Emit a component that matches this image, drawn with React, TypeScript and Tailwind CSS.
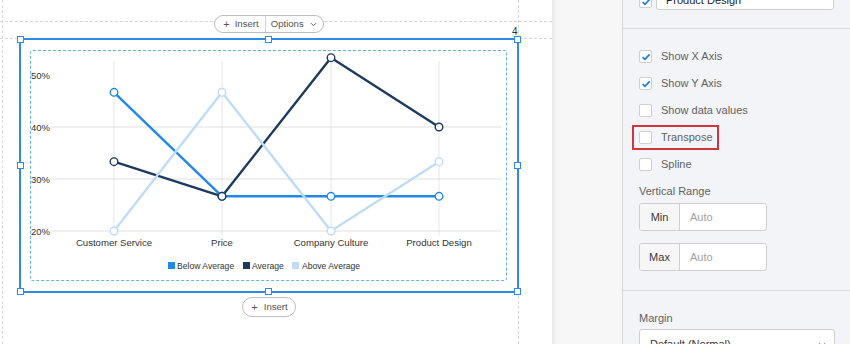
import React from "react";

// ─── Chart data ─────────────────────────────────────────────────────────────

const categories = [
    { label: "Customer Service", x: 114 },
    { label: "Price", x: 222 },
    { label: "Company Culture", x: 331 },
    { label: "Product Design", x: 439 },
];

const series = [
    { name: "Below Average", color: "#2288e8", values: [46.67, 26.67, 26.67, 26.67] },
    { name: "Average", color: "#1b3a5e", values: [33.33, 26.67, 53.33, 40] },
    { name: "Above Average", color: "#bfdcf7", values: [20, 46.67, 20, 33.33] },
];

// 20% sits at y=231, each 10% is 52px
const yFor = (v: number) => 231 - (v - 20) * 5.2;

function LineChart() {
    return (
        <svg width={475} height={229} viewBox="31 51 475 229" className="block">
            {/* grid */}
            {categories.map((c) => (
                <line key={c.label} x1={c.x} x2={c.x} y1={61} y2={236} stroke="#e6e6e6" strokeWidth={1} />
            ))}
            {[127, 179, 231].map((y) => (
                <line key={y} x1={50} x2={501} y1={y} y2={y} stroke="#e0e0e0" strokeWidth={1} />
            ))}

            {/* y labels */}
            {[
                { t: "50%", y: 75 },
                { t: "40%", y: 127 },
                { t: "30%", y: 179 },
                { t: "20%", y: 231 },
            ].map((l) => (
                <text key={l.t} x={31} y={l.y + 3.5} fontSize={9.5} fill="#333">
                    {l.t}
                </text>
            ))}

            {/* series */}
            {series.map((s) => (
                <polyline
                    key={s.name}
                    points={s.values.map((v, i) => `${categories[i].x},${yFor(v)}`).join(" ")}
                    fill="none"
                    stroke={s.color}
                    strokeWidth={2.4}
                    strokeLinejoin="round"
                />
            ))}
            {series.map((s) =>
                s.values.map((v, i) => (
                    <circle
                        key={`${s.name}-${i}`}
                        cx={categories[i].x}
                        cy={yFor(v)}
                        r={3.8}
                        fill="#fff"
                        stroke={s.color}
                        strokeWidth={1.4}
                    />
                )),
            )}

            {/* x labels */}
            {categories.map((c) => (
                <text key={c.label} x={c.x} y={245.5} fontSize={9.6} fill="#333" textAnchor="middle">
                    {c.label}
                </text>
            ))}

            {/* legend */}
            <rect x={168} y={262} width={7} height={7} fill="#2288e8" />
            <text x={177} y={269} fontSize={8.6} fill="#333">Below Average</text>
            <rect x={243} y={262} width={7} height={7} fill="#1b3a5e" />
            <text x={252} y={269} fontSize={8.6} fill="#333">Average</text>
            <rect x={292} y={262} width={7} height={7} fill="#bfdcf7" />
            <text x={302} y={269} fontSize={8.6} fill="#333">Above Average</text>
        </svg>
    );
}

// ─── Small pieces ───────────────────────────────────────────────────────────

function Handle({ className }: { className: string }) {
    return <span className={`absolute h-[7px] w-[7px] border border-[#2f8ae6] bg-white ${className}`} />;
}

function Checkbox({ checked }: { checked?: boolean }) {
    return (
        <span className="flex h-[13px] w-[13px] shrink-0 items-center justify-center rounded-[2px] border border-[#cfcfcf] bg-white">
            {checked && (
                <svg width="10" height="10" viewBox="0 0 10 10">
                    <polyline points="1.6,5.2 4,7.4 8.6,2.4" fill="none" stroke="#1a7fd8" strokeWidth={1.7} />
                </svg>
            )}
        </span>
    );
}

function OptionRow({ label, checked, highlight }: { label: string; checked?: boolean; highlight?: boolean }) {
    return (
        <div className="relative flex h-[27px] items-center gap-[9px]">
            <Checkbox checked={checked} />
            <span className="text-[11px] text-[#626262]">{label}</span>
            {highlight && (
                <span className="absolute -left-[7px] top-[1px] h-[25px] w-[87px] border-2 border-[#d1343b]" />
            )}
        </div>
    );
}

function RangeInput({ label }: { label: string }) {
    return (
        <div className="flex h-[28px] w-[128px] overflow-hidden rounded-[3px] border border-[#cfcfcf] bg-white">
            <div className="flex w-[40px] items-center justify-center border-r border-[#cfcfcf] bg-[#f6f6f7] text-[11px] font-medium text-[#3a3a3a]">
                {label}
            </div>
            <div className="flex items-center pl-[10px] text-[11px] text-[#a0a0a0]">Auto</div>
        </div>
    );
}

// ─── Page ───────────────────────────────────────────────────────────────────

export default function App() {
    return (
        <div className="relative flex h-[344px] w-[850px] overflow-hidden bg-white font-['Liberation_Sans',Arial,sans-serif]">
            {/* Canvas */}
            <div className="relative w-[552px] shrink-0 bg-white">
                {/* guides */}
                <div className="absolute left-0 right-0 top-[21px] border-t border-dashed border-[#d6d6d6]" />
                <div className="absolute left-0 right-0 top-[38px] border-t border-dashed border-[#d6d6d6]" />
                <div className="absolute bottom-0 left-[2px] top-0 border-l border-dashed border-[#dadada]" />
                <div className="absolute bottom-0 left-[518px] top-0 border-l border-dashed border-[#d6d6d6]" />
                <span className="absolute left-[512px] top-[27px] text-[10px] leading-none text-[#333]">4</span>

                <div className="relative ml-[19px] flex w-[500px] flex-col items-center">
                    {/* Insert / Options */}
                    <div className="mt-[15px] flex h-[18px] items-center rounded-full border border-[#bdbdbd] bg-white text-[9.6px] text-[#555]">
                        <span className="flex h-full items-center gap-[5px] border-r border-[#cfcfcf] pl-[8px] pr-[6px]">
                            <span className="text-[11px] leading-none">+</span>Insert
                        </span>
                        <span className="flex h-full items-center gap-[6px] pl-[5px] pr-[6px]">
                            Options
                            <svg width="7" height="5" viewBox="0 0 7 5">
                                <polyline points="0.8,1 3.5,3.8 6.2,1" fill="none" stroke="#777" strokeWidth={1} />
                            </svg>
                        </span>
                    </div>

                    {/* Selected chart block */}
                    <div className="relative mt-[5px] h-[255px] w-[500px]">
                        <div className="h-full border-2 border-[#2f8ae6] bg-white px-[9px] py-[10px]">
                            <div className="h-[231px] w-[477px] rounded-[3px] border border-dashed border-[#62b0f0]">
                                <LineChart />
                            </div>
                        </div>
                        <Handle className="-left-[2px] -top-[2px]" />
                        <Handle className="left-[246px] -top-[2px]" />
                        <Handle className="-right-[2px] -top-[2px]" />
                        <Handle className="-left-[2px] top-[124px]" />
                        <Handle className="-right-[2px] top-[124px]" />
                        <Handle className="-bottom-[2px] -left-[2px]" />
                        <Handle className="-bottom-[2px] left-[246px]" />
                        <Handle className="-bottom-[2px] -right-[2px]" />
                    </div>

                    {/* Insert below */}
                    <div className="mt-[4px] flex h-[20px] items-center gap-[6px] rounded-full border border-[#bdbdbd] bg-white pl-[8px] pr-[7px] text-[9.6px] text-[#555]">
                        <span className="text-[11px] leading-none">+</span>Insert
                    </div>
                </div>
            </div>

            {/* Gutter */}
            <div className="w-[70px] shrink-0 bg-[#f7f7f8] shadow-[inset_6px_0_5px_-4px_rgba(0,0,0,0.07)]" />

            {/* Sidebar */}
            <div className="flex-1 border-l border-[#d9d9dc] bg-[#f3f4f7]">
                <div className="flex h-[29px] items-end gap-[4px] border-b border-[#dcdde0] pb-[18px] pl-[16px]">
                    <span className="mb-[2px]">
                        <Checkbox checked />
                    </span>
                    <div className="h-[28px] w-[178px] shrink-0 rounded-[3px] border border-[#cfcfcf] bg-white pl-[9px] pt-[10px] text-[11px] leading-[14px] text-[#222]">
                        Product Design
                    </div>
                </div>

                <div className="border-b border-[#dcdde0] pb-[19px] pl-[16px] pt-[14px]">
                    <OptionRow label="Show X Axis" checked />
                    <OptionRow label="Show Y Axis" checked />
                    <OptionRow label="Show data values" />
                    <OptionRow label="Transpose" highlight />
                    <OptionRow label="Spline" />

                    <div className="mt-[5px] h-[16px] text-[11px] leading-[16px] text-[#626262]">Vertical Range</div>
                    <div className="mt-[4px]">
                        <RangeInput label="Min" />
                    </div>
                    <div className="mt-[12px]">
                        <RangeInput label="Max" />
                    </div>
                </div>

                <div className="pl-[16px] pt-[19px]">
                    <div className="h-[16px] text-[11px] leading-[16px] text-[#626262]">Margin</div>
                    <div className="mt-[3px] flex h-[30px] w-[196px] items-center justify-between rounded-[3px] border border-[#cfcfcf] bg-white pl-[10px] pr-[8px] text-[11px] text-[#333]">
                        Default (Normal)
                        <svg width="8" height="5" viewBox="0 0 8 5">
                            <polyline points="0.8,1 4,4 7.2,1" fill="none" stroke="#888" strokeWidth={1} />
                        </svg>
                    </div>
                </div>
            </div>
        </div>
    );
}
